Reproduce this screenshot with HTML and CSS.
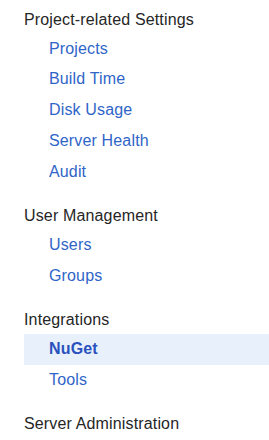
FILE: index.html
```html
<!DOCTYPE html>
<html lang="en">
<head>
<meta charset="utf-8">
<title>Administration</title>
<link rel="stylesheet" href="styles.css">
</head>
<body>
<nav class="admin-nav">
  <section class="nav-section">
    <div class="nav-title">Project-related Settings</div>
    <ul class="nav-list">
      <li><a class="nav-link" href="#">Projects</a></li>
      <li><a class="nav-link" href="#">Build Time</a></li>
      <li><a class="nav-link" href="#">Disk Usage</a></li>
      <li><a class="nav-link" href="#">Server Health</a></li>
      <li><a class="nav-link" href="#">Audit</a></li>
    </ul>
  </section>
  <section class="nav-section">
    <div class="nav-title">User Management</div>
    <ul class="nav-list">
      <li><a class="nav-link" href="#">Users</a></li>
      <li><a class="nav-link" href="#">Groups</a></li>
    </ul>
  </section>
  <section class="nav-section">
    <div class="nav-title">Integrations</div>
    <ul class="nav-list">
      <li class="active"><a class="nav-link" href="#">NuGet</a></li>
      <li><a class="nav-link" href="#">Tools</a></li>
    </ul>
  </section>
  <section class="nav-section">
    <div class="nav-title">Server Administration</div>
  </section>
</nav>
</body>
</html>
```

FILE: styles.css
```css
html, body {
  margin: 0;
  padding: 0;
  background: #ffffff;
}

body {
  font-family: "Liberation Sans", Arial, sans-serif;
  font-size: 16px;
  letter-spacing: 0.15px;
  color: #262626;
}

.admin-nav {
  padding: 4.5px 0 0 24px;
}

.nav-section {
  margin-bottom: 13.5px;
}

.nav-title {
  padding: 5px 0;
  line-height: 19px;
  color: #262626;
}

.nav-list {
  list-style: none;
  margin: 0;
  padding: 0;
}

.nav-link {
  display: block;
  padding: 5px 0 5px 25px;
  line-height: 20.75px;
  color: #2f65c8;
  text-decoration: none;
}

.active {
  background: #e8f1fb;
}

.active .nav-link {
  font-weight: bold;
  color: #2a52be;
}
```
